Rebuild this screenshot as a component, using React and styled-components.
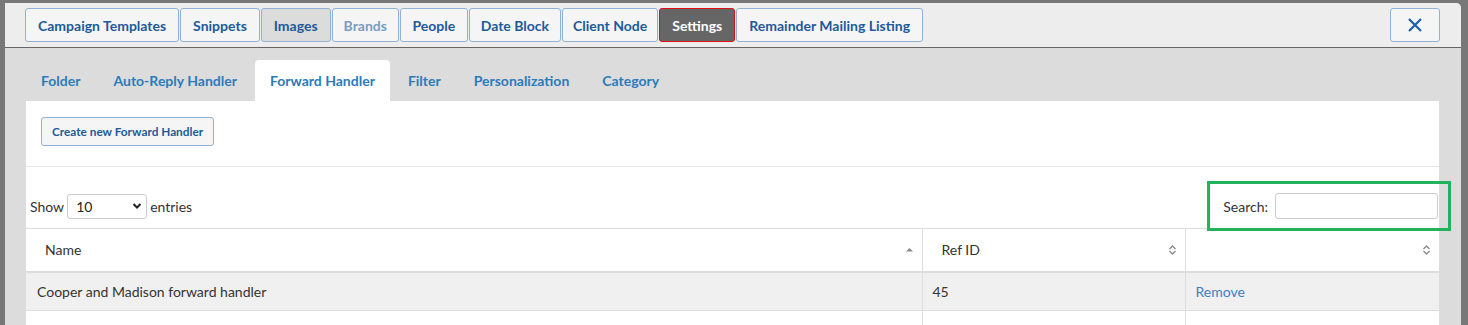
import React from "react";
import styled, { createGlobalStyle } from "styled-components";

const Global = createGlobalStyle`
  html, body { margin: 0; padding: 0; }
  body {
    background: #787878;
    font-family: Lato, "Liberation Sans", sans-serif;
    overflow: hidden;
  }
`;

const Backdrop = styled.div`
  padding: 3px 7px 0 5px;
  height: 322px;
`;

const Modal = styled.div`
  background: #dcdcdc;
  border-radius: 0 5px 0 0;
  height: 100%;
  display: flex;
  flex-direction: column;
  overflow: hidden;
`;

const Header = styled.div`
  background: #ededed;
  border-bottom: 1px solid #666;
  padding: 5px 21px 5px 20px;
  display: flex;
  align-items: center;
  justify-content: space-between;
`;

const ButtonGroup = styled.div`
  display: flex;
  gap: 1px;
`;

const TopButton = styled.button`
  height: 34px;
  padding: 0 ${(p) => p.$pad || 12}px;
  border-radius: 3px;
  border: 1px solid ${(p) => (p.$active ? "#e01010" : "#8fb2d6")};
  background: ${(p) => (p.$active ? "#666" : p.$pressed ? "#dcdcdc" : "#f5f5f5")};
  color: ${(p) => (p.$active ? "#fff" : p.$disabled ? "#7a9cc2" : "#1d5a9a")};
  font-family: inherit;
  font-weight: 700;
  font-size: 14px;
  white-space: nowrap;
`;

const CloseButton = styled.button`
  width: 50px;
  height: 34px;
  border-radius: 3px;
  border: 1px solid #8fb2d6;
  background: #f5f5f5;
  display: flex;
  align-items: center;
  justify-content: center;
  padding: 0;
`;

const Body = styled.div`
  padding: 12px 22px 0 21px;
  flex: 1;
  display: flex;
  flex-direction: column;
`;

const Tabs = styled.div`
  display: flex;
  gap: 3px;
`;

const Tab = styled.div`
  height: 41px;
  padding: 0 15px;
  display: flex;
  align-items: center;
  font-weight: 700;
  font-size: 14px;
  color: #2b7bbb;
  border-radius: 4px 4px 0 0;
  background: ${(p) => (p.$active ? "#fff" : "transparent")};
`;

const Panel = styled.div`
  background: #fff;
  flex: 1;
`;

const Toolbar = styled.div`
  padding: 16px 15px 20px;
  border-bottom: 1px solid #e6e6e6;
`;

const CreateButton = styled.button`
  height: 29px;
  padding: 0 10px;
  border: 1px solid #8fb2d6;
  border-radius: 3px;
  background: #f5f5f5;
  color: #1d5a9a;
  font-family: inherit;
  font-weight: 700;
  font-size: 11.8px;
  display: block;
`;

const Controls = styled.div`
  display: flex;
  justify-content: space-between;
  align-items: center;
  padding: 26px 1px 9px 4px;
  font-size: 14px;
  color: #333;
`;

const Length = styled.label`
  display: flex;
  align-items: center;
  gap: 3px;
`;

const Select = styled.div`
  width: 80px;
  height: 25px;
  border: 1px solid #ccc;
  border-radius: 3px;
  display: flex;
  align-items: center;
  justify-content: space-between;
  padding: 0 4px 0 8px;
  box-sizing: border-box;
  font-size: 14px;
  color: #222;
`;

const SearchWrap = styled.label`
  position: relative;
  display: flex;
  align-items: center;
  gap: 7px;
`;

const SearchInput = styled.div`
  width: 163px;
  height: 26px;
  border: 1px solid #ccc;
  border-radius: 3px;
  box-sizing: border-box;
`;

const Highlight = styled.div`
  position: absolute;
  left: -16px;
  top: -12px;
  width: 244px;
  height: 50px;
  border: 3px solid #22b25e;
  box-sizing: border-box;
  pointer-events: none;
`;

const Table = styled.table`
  width: 100%;
  border-collapse: collapse;
  font-size: 14px;
  color: #333;
`;

const Th = styled.th`
  text-align: left;
  font-weight: 400;
  height: 43px;
  padding: 0 8px 0 19px;
  border-top: 1px solid #ddd;
  border-bottom: 2px solid #ddd;
  border-left: ${(p) => (p.$first ? "none" : "1px solid #ddd")};
  width: ${(p) => p.$w || "auto"};
  box-sizing: border-box;
`;

const ThInner = styled.div`
  display: flex;
  align-items: center;
  justify-content: space-between;
`;

const Td = styled.td`
  height: 39px;
  padding: 0 10px 0 ${(p) => (p.$first ? "11px" : "10px")};
  border-bottom: 1px solid #ddd;
  border-left: ${(p) => (p.$first ? "none" : "1px solid #ddd")};
  box-sizing: border-box;
`;

const Row = styled.tr`
  background: ${(p) => (p.$odd ? "#f0f0f0" : "#fff")};
`;

const Link = styled.span`
  color: #3a80c2;
`;

const SortBoth = () => (
  <svg width="9" height="12" viewBox="0 0 9 12">
    <path d="M1.5 5 L4.5 2 L7.5 5" fill="none" stroke="#888" strokeWidth="1.3" />
    <path d="M1.5 7 L4.5 10 L7.5 7" fill="none" stroke="#888" strokeWidth="1.3" />
  </svg>
);

const SortAsc = () => (
  <svg width="9" height="12" viewBox="0 0 9 12">
    <path d="M1 7.5 L4.5 4 L8 7.5 Z" fill="#888" />
  </svg>
);

const topButtons = [
  { label: "Campaign Templates", pad: 12 },
  { label: "Snippets", pad: 12 },
  { label: "Images", pad: 12 },
  { label: "Brands", disabled: true, pad: 11 },
  { label: "People", pad: 11.5 },
  { label: "Date Block", pad: 11 },
  { label: "Client Node", pad: 10 },
  { label: "Settings", active: true, pad: 12 },
  { label: "Remainder Mailing Listing", pad: 12 },
];

const tabs = ["Folder", "Auto-Reply Handler", "Forward Handler", "Filter", "Personalization", "Category"];

export default function App() {
  return (
    <>
      <Global />
      <Backdrop>
        <Modal>
          <Header>
            <ButtonGroup>
              {topButtons.map((b) => (
                <TopButton
                  key={b.label}
                  $active={b.active}
                  $pressed={b.label === "Images"}
                  $disabled={b.disabled}
                  $pad={b.pad}
                >
                  {b.label}
                </TopButton>
              ))}
            </ButtonGroup>
            <CloseButton aria-label="Close">
              <svg width="16" height="16" viewBox="0 0 16 16">
                <path d="M2 2 L14 14 M14 2 L2 14" stroke="#1d5fa8" strokeWidth="2.2" />
              </svg>
            </CloseButton>
          </Header>
          <Body>
            <Tabs>
              {tabs.map((t) => (
                <Tab key={t} $active={t === "Forward Handler"}>
                  {t}
                </Tab>
              ))}
            </Tabs>
            <Panel>
              <Toolbar>
                <CreateButton>Create new Forward Handler</CreateButton>
              </Toolbar>
              <Controls>
                <Length>
                  Show
                  <Select>
                    <span>10</span>
                    <svg width="10" height="8" viewBox="0 0 10 8">
                      <path d="M1.5 2 L5 5.5 L8.5 2" fill="none" stroke="#222" strokeWidth="2" />
                    </svg>
                  </Select>
                  entries
                </Length>
                <SearchWrap>
                  Search:
                  <SearchInput />
                  <Highlight />
                </SearchWrap>
              </Controls>
              <Table>
                <thead>
                  <tr>
                    <Th $first $w="896px">
                      <ThInner>
                        Name <SortAsc />
                      </ThInner>
                    </Th>
                    <Th $w="263px">
                      <ThInner>
                        Ref ID <SortBoth />
                      </ThInner>
                    </Th>
                    <Th>
                      <ThInner>
                        <span />
                        <SortBoth />
                      </ThInner>
                    </Th>
                  </tr>
                </thead>
                <tbody>
                  <Row $odd>
                    <Td $first>Cooper and Madison forward handler</Td>
                    <Td>45</Td>
                    <Td>
                      <Link>Remove</Link>
                    </Td>
                  </Row>
                  <Row>
                    <Td $first>&nbsp;</Td>
                    <Td />
                    <Td />
                  </Row>
                </tbody>
              </Table>
            </Panel>
          </Body>
        </Modal>
      </Backdrop>
    </>
  );
}
